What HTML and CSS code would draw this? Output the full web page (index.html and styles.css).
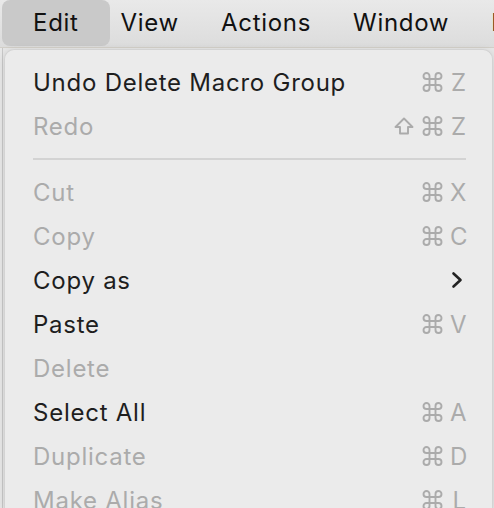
FILE: index.html
```html
<!DOCTYPE html>
<html>
<head>
<meta charset="utf-8">
<link rel="stylesheet" href="styles.css">
</head>
<body>
<div class="menubar">
  <span class="bar-item active">Edit</span>
  <span class="bar-item">View</span>
  <span class="bar-item">Actions</span>
  <span class="bar-item">Window</span>
  <span class="bar-item">Help</span>
</div>
<div class="stage">
  <div class="menu">
    <div class="row"><span class="label">Undo Delete Macro Group</span><span class="keys"><svg class="cmd" viewBox="3 3 18 18"><path d="M15 6v12a3 3 0 1 0 3-3H6a3 3 0 1 0 3 3V6a3 3 0 1 0-3 3h12a3 3 0 1 0-3-3"/></svg><span class="key">Z</span></span></div>
    <div class="row disabled"><span class="label">Redo</span><span class="keys"><svg class="shift" viewBox="0 0 20 18"><path d="M10 1.5 L18.5 10 H14 V16.5 H6 V10 H1.5 Z"/></svg><svg class="cmd" viewBox="3 3 18 18"><path d="M15 6v12a3 3 0 1 0 3-3H6a3 3 0 1 0 3 3V6a3 3 0 1 0-3 3h12a3 3 0 1 0-3-3"/></svg><span class="key">Z</span></span></div>
    <div class="sep"></div>
    <div class="row disabled"><span class="label">Cut</span><span class="keys"><svg class="cmd" viewBox="3 3 18 18"><path d="M15 6v12a3 3 0 1 0 3-3H6a3 3 0 1 0 3 3V6a3 3 0 1 0-3 3h12a3 3 0 1 0-3-3"/></svg><span class="key">X</span></span></div>
    <div class="row disabled"><span class="label">Copy</span><span class="keys"><svg class="cmd" viewBox="3 3 18 18"><path d="M15 6v12a3 3 0 1 0 3-3H6a3 3 0 1 0 3 3V6a3 3 0 1 0-3 3h12a3 3 0 1 0-3-3"/></svg><span class="key">C</span></span></div>
    <div class="row"><span class="label">Copy as</span><svg class="chev" width="12" height="18" viewBox="0 0 12 18"><path d="M2.5 2.5 L9.5 9 L2.5 15.5"/></svg></div>
    <div class="row"><span class="label">Paste</span><span class="keys"><svg class="cmd" viewBox="3 3 18 18"><path d="M15 6v12a3 3 0 1 0 3-3H6a3 3 0 1 0 3 3V6a3 3 0 1 0-3 3h12a3 3 0 1 0-3-3"/></svg><span class="key">V</span></span></div>
    <div class="row disabled"><span class="label">Delete</span></div>
    <div class="row"><span class="label">Select All</span><span class="keys"><svg class="cmd" viewBox="3 3 18 18"><path d="M15 6v12a3 3 0 1 0 3-3H6a3 3 0 1 0 3 3V6a3 3 0 1 0-3 3h12a3 3 0 1 0-3-3"/></svg><span class="key">A</span></span></div>
    <div class="row disabled"><span class="label">Duplicate</span><span class="keys"><svg class="cmd" viewBox="3 3 18 18"><path d="M15 6v12a3 3 0 1 0 3-3H6a3 3 0 1 0 3 3V6a3 3 0 1 0-3 3h12a3 3 0 1 0-3-3"/></svg><span class="key">D</span></span></div>
    <div class="row disabled"><span class="label">Make Alias</span><span class="keys"><svg class="cmd" viewBox="3 3 18 18"><path d="M15 6v12a3 3 0 1 0 3-3H6a3 3 0 1 0 3 3V6a3 3 0 1 0-3 3h12a3 3 0 1 0-3-3"/></svg><span class="key">L</span></span></div>
  </div>
</div>
</body>
</html>
```

FILE: styles.css
```css
html, body {
  margin: 0;
  padding: 0;
}
body {
  width: 494px;
  height: 508px;
  overflow: hidden;
  background: #e4e4e4;
  font-family: "Inter", "Noto Sans", sans-serif;
}
.menubar {
  height: 48px;
  display: flex;
  align-items: flex-start;
  gap: 42px;
  padding-left: 2px;
  box-sizing: border-box;
  background: linear-gradient(#e9e9e9, #dcdcdc);
  border-bottom: 1px solid #d2cfc8;
  white-space: nowrap;
  overflow: hidden;
}
.bar-item {
  font-size: 24px;
  line-height: 46px;
  color: #111;
  letter-spacing: 0.7px;
}
.bar-item.active {
  background: #c9c9c9;
  border-radius: 8px;
  padding: 0 31px 0 31px;
  margin-right: -31px;
}
.stage {
  display: flex;
  padding: 1px 1px 0 4px;
  height: 460px;
  box-sizing: border-box;
  background: linear-gradient(90deg, #e8e8e8 0, #e8e8e8 2px, #c8c8c8 2px, #c8c8c8 3px, #e6e6e6 3px);
}
.menu {
  flex: 1;
  background: #ebebeb;
  border: 1px solid #d3d3d3;
  border-bottom: none;
  border-radius: 10px 10px 0 0;
  padding: 10px 26px 0 28px;
  box-shadow: 0 2px 8px rgba(0, 0, 0, 0.12);
}
.row {
  height: 44px;
  display: flex;
  align-items: center;
  justify-content: space-between;
  font-size: 24px;
  color: #1e1e1e;
  white-space: nowrap;
}
.row.disabled {
  color: #ababab;
}
.label {
  letter-spacing: 0.75px;
}
.keys {
  display: flex;
  align-items: center;
  color: #ababab;
}
.cmd {
  width: 19px;
  height: 18px;
  overflow: visible;
  margin-right: 8px;
}
.cmd path, .shift path {
  fill: none;
  stroke: #ababab;
  stroke-width: 1.9;
  stroke-linecap: round;
  stroke-linejoin: round;
}
.shift {
  width: 20px;
  height: 18px;
  margin-right: 9px;
  overflow: visible;
}
.key {
  font-size: 24px;
  width: 16px;
  text-align: right;
}
.chev {
  margin-right: 3px;
}
.chev path {
  fill: none;
  stroke: #222;
  stroke-width: 2.6;
  stroke-linecap: round;
  stroke-linejoin: round;
}
.sep {
  height: 2px;
  background: #d3d3d3;
  margin: 10px 0 10px;
}
```
